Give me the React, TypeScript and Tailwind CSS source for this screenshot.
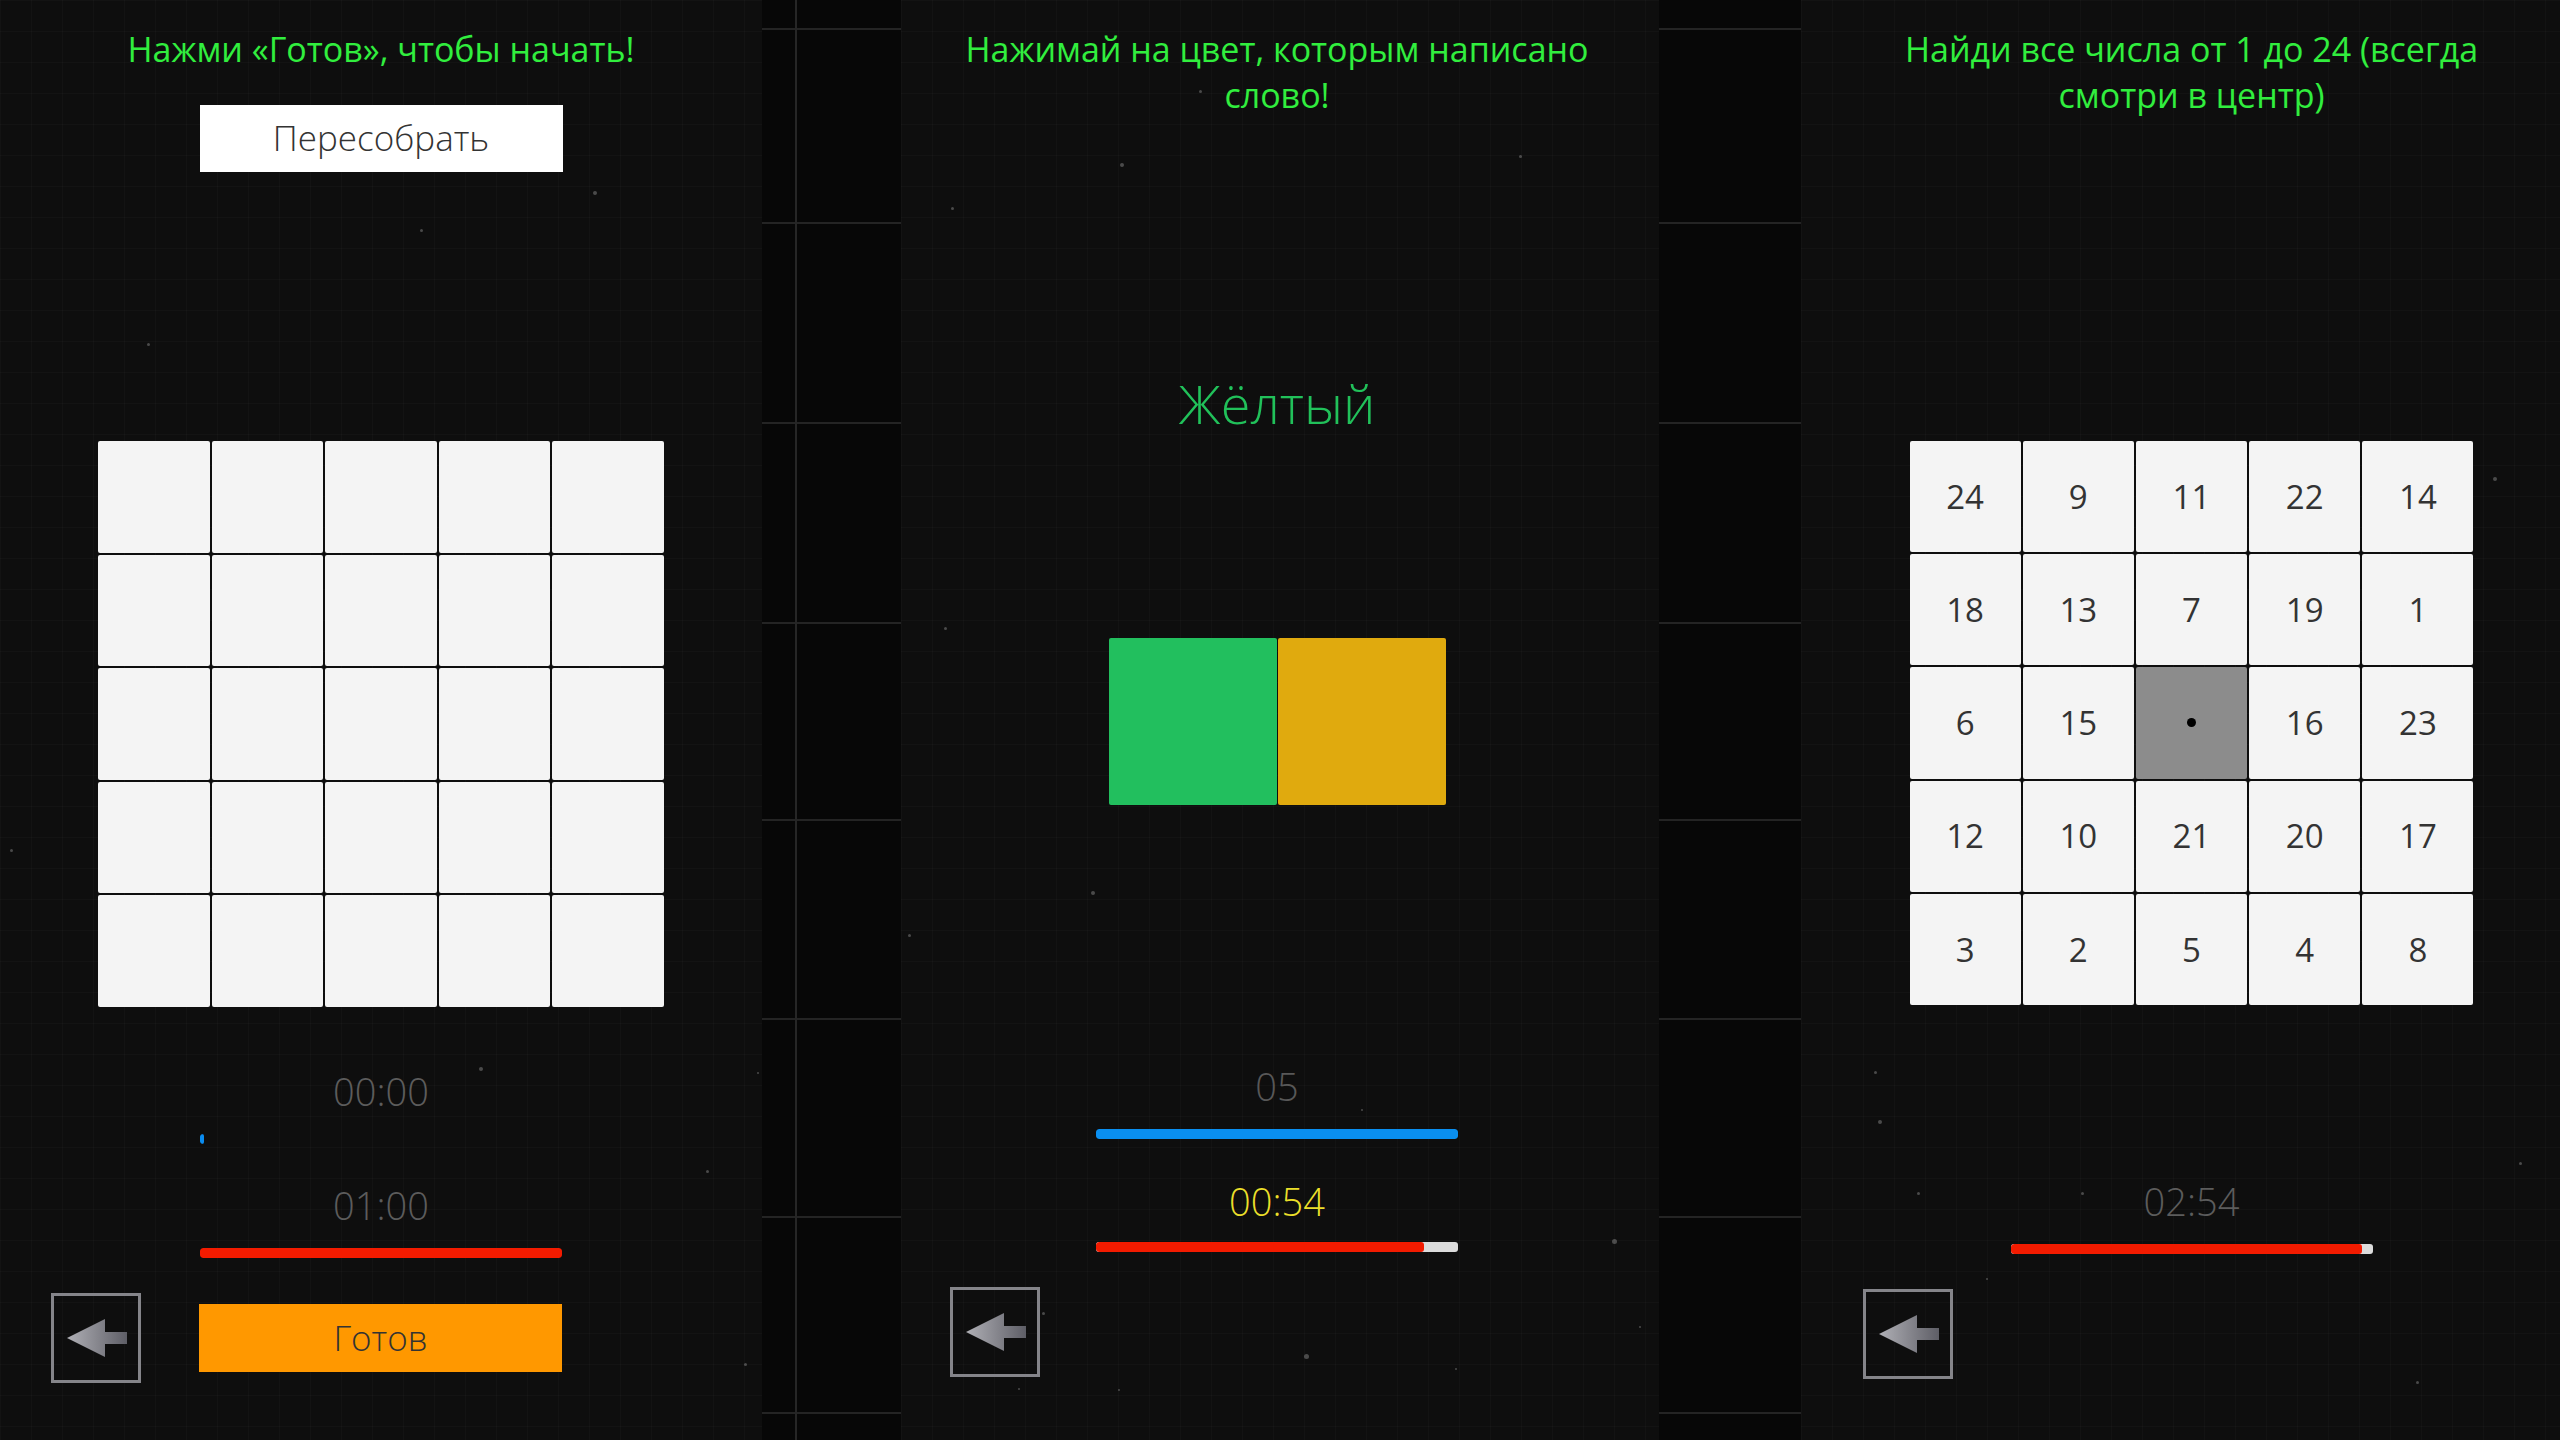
import React from 'react';

const FONT = "font-['Open_Sans','Noto_Sans',sans-serif]";

const schulte = [
  [24, 9, 11, 22, 14],
  [18, 13, 7, 19, 1],
  [6, 15, 0, 16, 23],
  [12, 10, 21, 20, 17],
  [3, 2, 5, 4, 8],
];

// faint specks scattered over the dark background
const specks: [number, number, number][] = [
  [593, 191, 4], [420, 229, 3], [147, 343, 3], [479, 1067, 4], [706, 1170, 3],
  [744, 1363, 3], [757, 1072, 2], [10, 849, 3], [1199, 90, 3], [1120, 163, 4],
  [951, 207, 3], [1519, 155, 3], [944, 627, 3], [1091, 891, 4], [908, 934, 3],
  [1612, 1239, 5], [1304, 1354, 5], [1361, 1109, 2], [1639, 1326, 2], [1042, 1312, 3],
  [1018, 1388, 2], [1118, 1389, 2], [1455, 1368, 2], [1878, 1120, 4], [1917, 1192, 3],
  [2081, 1192, 3], [1986, 1278, 2], [2416, 1381, 3], [2493, 477, 4], [1874, 1071, 3],
  [2519, 1162, 3],
];

const panelBg =
  'bg-[#0e0e0e] bg-[linear-gradient(to_right,rgba(255,255,255,0.02)_1px,transparent_1px),linear-gradient(to_bottom,rgba(255,255,255,0.02)_1px,transparent_1px)] bg-size-[31px_31px]';

function BackButton() {
  return (
    <button className="w-[90px] h-[90px] shrink-0 border-[3px] border-[#85858a] bg-transparent p-0">
      <svg width="84" height="84" viewBox="3 3 84 84" className="block">
        <defs>
          <linearGradient id="arrowFill" x1="0" y1="0" x2="1" y2="0">
            <stop offset="0" stopColor="#b0b0b6" />
            <stop offset="1" stopColor="#5e5e66" />
          </linearGradient>
        </defs>
        <polygon points="16,45 54,26 54,39 76,39 76,51 54,51 54,64" fill="url(#arrowFill)" />
      </svg>
    </button>
  );
}

function Bar({ color, fill, track }: { color: string; fill: number; track?: string }) {
  return (
    <div className={`w-[362px] h-[10px] rounded-[3px] overflow-hidden ${track ?? ''}`}>
      <div className={`h-full rounded-[3px] ${color}`} style={{ width: `${fill}%` }} />
    </div>
  );
}

function Title({ children }: { children: React.ReactNode }) {
  return (
    <h1 className="pt-[26px] text-[34px] leading-[46px] font-normal text-[#31ee3e] text-center">
      {children}
    </h1>
  );
}

function Timer({ children, color = 'text-[#5c5c5c]' }: { children: React.ReactNode; color?: string }) {
  return <div className={`text-[38px] leading-[40px] font-light ${color}`}>{children}</div>;
}

function Strip({ withPost }: { withPost?: boolean }) {
  const rows = [30, 194, 200, 200, 197, 199, 198, 196];
  return (
    <div className="relative h-full bg-[#070707] flex flex-col">
      {withPost && <div className="absolute top-0 bottom-0 left-[33px] w-[2px] bg-[#262626]" />}
      {rows.map((h, i) => (
        <div key={i} className="shrink-0 border-b-2 border-[#242424]" style={{ height: h }} />
      ))}
    </div>
  );
}

function ReassemblePanel() {
  return (
    <div className={`w-[762px] h-full flex flex-col items-center ${panelBg}`}>
      <Title>Нажми «Готов», чтобы начать!</Title>
      <button className="mt-[33px] w-[363px] h-[67px] bg-white text-[#333] text-[35px] font-light">
        Пересобрать
      </button>
      <div className="mt-[269px] w-[566px] h-[566px] grid grid-cols-5 grid-rows-5 gap-[2px]">
        {Array.from({ length: 25 }).map((_, i) => (
          <div key={i} className="bg-[#f4f4f4] rounded-[2px]" />
        ))}
      </div>
      <div className="mt-[64px]">
        <Timer>00:00</Timer>
      </div>
      <div className="mt-[23px]">
        <Bar color="bg-[#0a8cf0]" fill={1} />
      </div>
      <div className="mt-[41px]">
        <Timer>01:00</Timer>
      </div>
      <div className="mt-[23px]">
        <Bar color="bg-[#f31b00]" fill={100} />
      </div>
      <div className="mt-[35px] self-stretch flex items-center gap-[58px] pl-[51px]">
        <BackButton />
        <button className="w-[363px] h-[68px] bg-[#ff9800] text-[#333] text-[35px] font-light">
          Готов
        </button>
      </div>
    </div>
  );
}

function StroopPanel() {
  return (
    <div className={`w-[758px] h-full flex flex-col items-center pr-[6px] ${panelBg}`}>
      <Title>
        Нажимай на цвет, которым написано
        <br />
        слово!
      </Title>
      <div className="mt-[255px] text-[54px] leading-[60px] font-light text-[#21c15a]">Жёлтый</div>
      <div className="mt-[205px] flex gap-[1px]">
        <div className="w-[168px] h-[167px] rounded-[2px] bg-[#22bf5e]" />
        <div className="w-[168px] h-[167px] rounded-[2px] bg-[#e0aa0e]" />
      </div>
      <div className="mt-[261px]">
        <Timer color="text-[#585858]">05</Timer>
      </div>
      <div className="mt-[23px]">
        <Bar color="bg-[#0a8ff0]" fill={100} />
      </div>
      <div className="mt-[42px]">
        <Timer color="text-[#ebdf2a]">00:54</Timer>
      </div>
      <div className="mt-[21px]">
        <Bar color="bg-[#f31b00]" fill={90.5} track="bg-[#dcdcdc]" />
      </div>
      <div className="mt-[35px] self-stretch pl-[49px]">
        <BackButton />
      </div>
    </div>
  );
}

function SchultePanel() {
  return (
    <div className={`w-[759px] h-full flex flex-col items-center pl-[22px] ${panelBg}`}>
      <Title>
        Найди все числа от 1 до 24 (всегда
        <br />
        смотри в центр)
      </Title>
      <div className="mt-[323px] w-[564px] h-[564px] grid grid-cols-5 grid-rows-5 gap-[2px]">
        {schulte.flat().map((n, i) =>
          n === 0 ? (
            <div key={i} className="bg-[#8c8c8c] rounded-[2px] flex items-center justify-center">
              <div className="w-[9px] h-[9px] rounded-full bg-black" />
            </div>
          ) : (
            <div
              key={i}
              className="bg-[#f4f4f4] rounded-[2px] flex items-center justify-center text-[33px] text-[#333]"
            >
              {n}
            </div>
          ),
        )}
      </div>
      <div className="mt-[176px]">
        <Timer>02:54</Timer>
      </div>
      <div className="mt-[23px]">
        <Bar color="bg-[#f31b00]" fill={97} track="bg-[#dcdcdc]" />
      </div>
      <div className="mt-[35px] self-stretch pl-[40px]">
        <BackButton />
      </div>
    </div>
  );
}

export default function App() {
  return (
    <div className={`relative w-[2560px] h-[1440px] overflow-hidden flex bg-[#0e0e0e] ${FONT}`}>
      <ReassemblePanel />
      <div className="w-[139px] h-full">
        <Strip withPost />
      </div>
      <StroopPanel />
      <div className="w-[142px] h-full">
        <Strip />
      </div>
      <SchultePanel />
      {specks.map(([x, y, s], i) => (
        <div
          key={i}
          className="absolute rounded-full bg-white/25 blur-[0.5px]"
          style={{ left: x, top: y, width: s, height: s }}
        />
      ))}
    </div>
  );
}
